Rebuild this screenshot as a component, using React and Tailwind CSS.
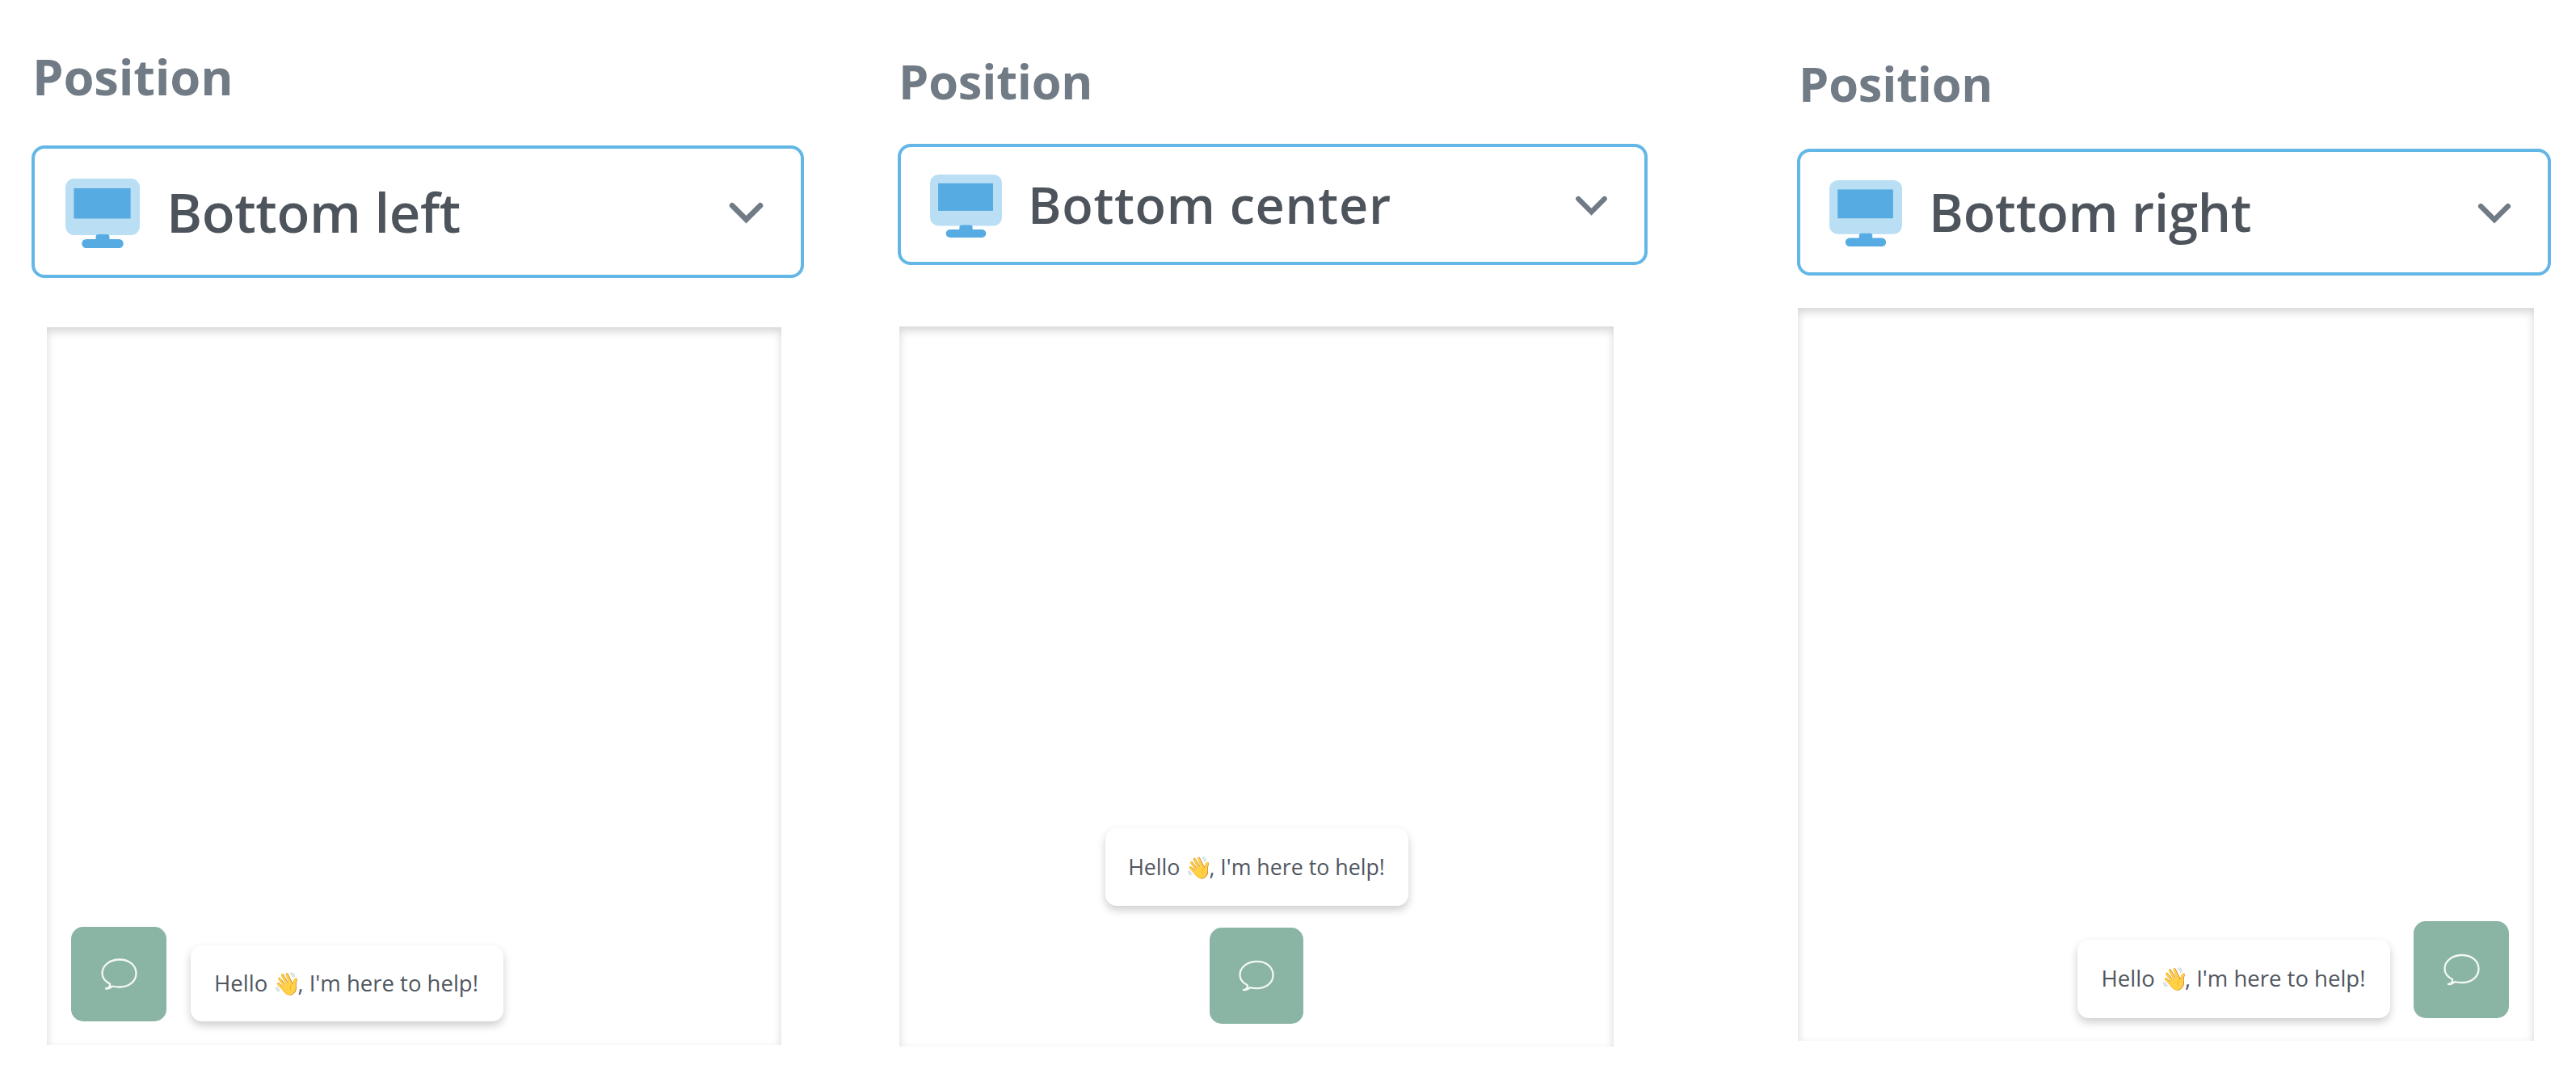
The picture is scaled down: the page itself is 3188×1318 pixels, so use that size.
import React from 'react';

/**
 * One entry per widget position. The three columns differ slightly in scale,
 * so every entry carries its own sizes.
 */
const columns = [
  {
    id: 'left',
    value: 'Bottom left',
    col: 'ml-[39px] w-[956px]',
    label: 'mt-[52px] h-[84px] pl-[1px] text-[61.5px] leading-[84px] tracking-[-0.2px]',
    select: 'mt-[44px] h-[164px] pl-[38px] pr-[46px]',
    icon: 'mt-[3px] h-[86px] w-[92px]',
    text: 'ml-[33px] text-[67px] tracking-[-0.4px]',
    chevron: 'mt-[4px] h-[29px] w-[43px]',
    preview: 'ml-[19px] mt-[61px] h-[888px] w-[909px] flex-row items-end gap-[30px] pb-[29px] pl-[30px]',
    launcher: 'h-[117px] w-[118px]',
    chat: 'h-[39px] w-[45px]',
    bubble: 'h-[94px] w-[387px] pr-[2px] text-[27.5px]',
  },
  {
    id: 'center',
    value: 'Bottom center',
    col: 'ml-[116px] w-[928px]',
    label: 'mt-[59px] h-[82px] pl-[1px] text-[59.5px] leading-[82px] tracking-[-0.2px]',
    select: 'mt-[37px] h-[150px] pl-[36px] pr-[45px]',
    icon: 'mt-[3px] h-[78px] w-[89px]',
    text: 'ml-[32px] text-[63px] tracking-[0.7px]',
    chevron: 'mt-[4px] h-[27px] w-[41px]',
    preview: 'ml-[2px] mt-[76px] h-[891px] w-[884px] flex-col-reverse items-center gap-[27px] pb-[28px]',
    launcher: 'h-[119px] w-[116px]',
    chat: 'h-[39px] w-[44px]',
    bubble: 'h-[96px] w-[375px] text-[26.75px]',
  },
  {
    id: 'right',
    value: 'Bottom right',
    col: 'ml-[185px] w-[933px]',
    label: 'mt-[62px] h-[82px] pl-[2px] text-[59.5px] leading-[82px] tracking-[-0.2px]',
    select: 'mt-[40px] h-[157px] pl-[36px] pr-[45px]',
    icon: 'mt-[3px] h-[82px] w-[90px]',
    text: 'ml-[33px] mt-[1px] text-[65px] tracking-[-0.2px]',
    chevron: 'mt-[5px] h-[28px] w-[42px]',
    preview: 'ml-[1px] mt-[40px] h-[907px] w-[911px] flex-row-reverse items-end gap-[29px] pb-[28px] pr-[31px]',
    launcher: 'h-[120px] w-[118px]',
    chat: 'h-[40px] w-[45px]',
    bubble: 'h-[97px] w-[387px] pb-[2px] pr-[1px] text-[27.5px]',
  },
];

function MonitorIcon({ className }) {
  return (
    <svg viewBox="0 0 93 86" preserveAspectRatio="none" className={`${className} shrink-0`}>
      <rect width="93" height="70" rx="11" fill="#badff5" />
      <rect x="10.5" y="12" width="71" height="37.5" fill="#56abe2" />
      <path d="M41 69h11q3 0 3 3v3h12a5.500 5.500 0 0 1 0 11H26a5.500 5.500 0 0 1 0-11h12v-3q0-3 3-3z" fill="#56abe2" />
    </svg>
  );
}

function ChevronIcon({ className }) {
  return (
    <svg viewBox="0 0 44 30" className={`${className} shrink-0`} fill="none" stroke="#717b85" strokeWidth="7">
      <path d="M4 4.500l18 18 18-18" strokeLinecap="round" />
    </svg>
  );
}

function ChatIcon({ className }) {
  return (
    <svg viewBox="0 0 45 39" className={className} fill="none" stroke="#f3f8f6" strokeWidth="2.300" strokeLinejoin="round">
      <path d="M6 37.500C9.500 36.800 11.500 34.800 11 31.500 4.800 28.300 1.500 23.500 1.500 18.500 1.500 8.800 11 1.500 23 1.500s20.500 7.300 20.500 17-8.500 17-20.500 17c-3 0-6-.2-9-1C11.500 37 9 37.800 6 37.500z" />
    </svg>
  );
}

function PositionColumn({ item }) {
  return (
    <section className={`${item.col} shrink-0`}>
      <h2 className={`${item.label} font-bold text-[#717b85]`}>Position</h2>

      {/* Select */}
      <div className={`${item.select} flex items-center rounded-[16px] border-4 border-[#63b7e6] bg-white`}>
        <MonitorIcon className={item.icon} />
        <span className={`${item.text} grow font-semibold whitespace-nowrap text-[#4d545b]`}>{item.value}</span>
        <ChevronIcon className={item.chevron} />
      </div>

      {/* Widget preview */}
      <div className={`${item.preview} flex bg-white shadow-[inset_0_5px_11px_rgba(0,0,0,0.17)]`}>
        <div className={`${item.launcher} flex shrink-0 items-center justify-center rounded-[15px] bg-[#8ab4a4]`}>
          <ChatIcon className={item.chat} />
        </div>
        <div
          className={`${item.bubble} flex shrink-0 items-center justify-center rounded-[14px] bg-white whitespace-nowrap text-[#50565f] shadow-[0_5px_11px_rgba(0,0,0,0.2)]`}
        >
          <p>
            Hello <span className="-mr-[4px] opacity-85">👋</span>, I'm here to help!
          </p>
        </div>
      </div>
    </section>
  );
}

export default function App() {
  return (
    <main className="flex h-[1318px] w-[3188px] overflow-hidden bg-white font-['Open_Sans',sans-serif]">
      {columns.map((item) => (
        <PositionColumn key={item.id} item={item} />
      ))}
    </main>
  );
}
